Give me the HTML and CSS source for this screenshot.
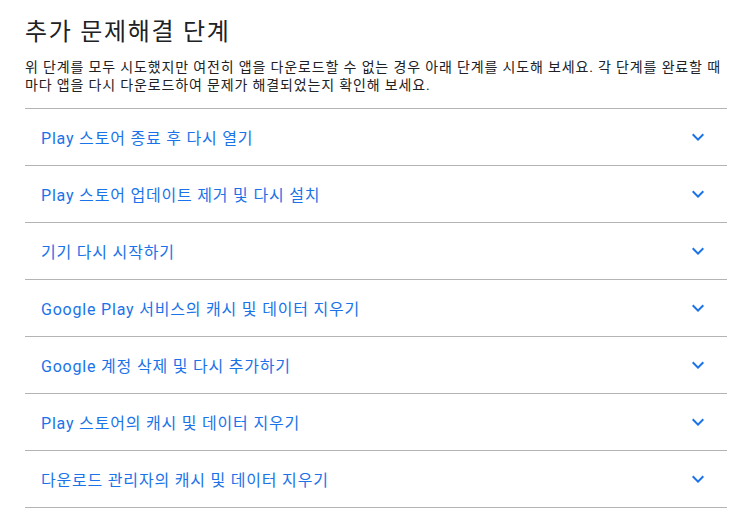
FILE: index.html
```html
<!DOCTYPE html>
<html lang="ko">
<head>
<meta charset="utf-8">
<link rel="stylesheet" href="styles.css">
</head>
<body>
<section class="steps">
  <h2 class="steps-title">추가 문제해결 단계</h2>
  <p class="steps-desc">위 단계를 모두 시도했지만 여전히 앱을 다운로드할 수 없는 경우 아래 단계를 시도해 보세요. 각 단계를 완료할 때 마다 앱을 다시 다운로드하여 문제가 해결되었는지 확인해 보세요.</p>
  <ul class="accordion">
    <li class="acc-item"><span class="acc-label">Play 스토어 종료 후 다시 열기</span><svg class="chev" viewBox="0 0 24 24"><path d="M16.59 8.59L12 13.17 7.41 8.59 6 10l6 6 6-6z"/></svg></li>
    <li class="acc-item"><span class="acc-label">Play 스토어 업데이트 제거 및 다시 설치</span><svg class="chev" viewBox="0 0 24 24"><path d="M16.59 8.59L12 13.17 7.41 8.59 6 10l6 6 6-6z"/></svg></li>
    <li class="acc-item"><span class="acc-label">기기 다시 시작하기</span><svg class="chev" viewBox="0 0 24 24"><path d="M16.59 8.59L12 13.17 7.41 8.59 6 10l6 6 6-6z"/></svg></li>
    <li class="acc-item"><span class="acc-label">Google Play 서비스의 캐시 및 데이터 지우기</span><svg class="chev" viewBox="0 0 24 24"><path d="M16.59 8.59L12 13.17 7.41 8.59 6 10l6 6 6-6z"/></svg></li>
    <li class="acc-item"><span class="acc-label">Google 계정 삭제 및 다시 추가하기</span><svg class="chev" viewBox="0 0 24 24"><path d="M16.59 8.59L12 13.17 7.41 8.59 6 10l6 6 6-6z"/></svg></li>
    <li class="acc-item"><span class="acc-label">Play 스토어의 캐시 및 데이터 지우기</span><svg class="chev" viewBox="0 0 24 24"><path d="M16.59 8.59L12 13.17 7.41 8.59 6 10l6 6 6-6z"/></svg></li>
    <li class="acc-item"><span class="acc-label">다운로드 관리자의 캐시 및 데이터 지우기</span><svg class="chev" viewBox="0 0 24 24"><path d="M16.59 8.59L12 13.17 7.41 8.59 6 10l6 6 6-6z"/></svg></li>
  </ul>
</section>
</body>
</html>
```

FILE: styles.css
```css
html, body {
  margin: 0;
  padding: 0;
  background: #ffffff;
}
body {
  font-family: Roboto, "Noto Sans CJK KR", sans-serif;
  color: #202124;
}
.steps {
  width: 702px;
  margin-left: 25px;
  padding-top: 16px;
}
.steps-title {
  margin: 0;
  font-size: 24px;
  font-weight: 400;
  line-height: 32px;
  letter-spacing: 1.7px;
}
.steps-desc {
  margin: 10px 0 14px;
  font-size: 14px;
  line-height: 18px;
  letter-spacing: 0.85px;
  word-break: keep-all;
}
.accordion {
  list-style: none;
  margin: 0;
  padding: 0;
  border-bottom: 1px solid #b4b4b4;
}
.acc-item {
  display: flex;
  align-items: center;
  justify-content: space-between;
  height: 56px;
  border-top: 1px solid #b4b4b4;
  padding: 0 17px 0 16px;
}
.acc-label {
  font-size: 16px;
  color: #1a73e8;
  letter-spacing: 0.8px;
}
.chev {
  width: 24px;
  height: 24px;
  fill: #1a73e8;
}
```
